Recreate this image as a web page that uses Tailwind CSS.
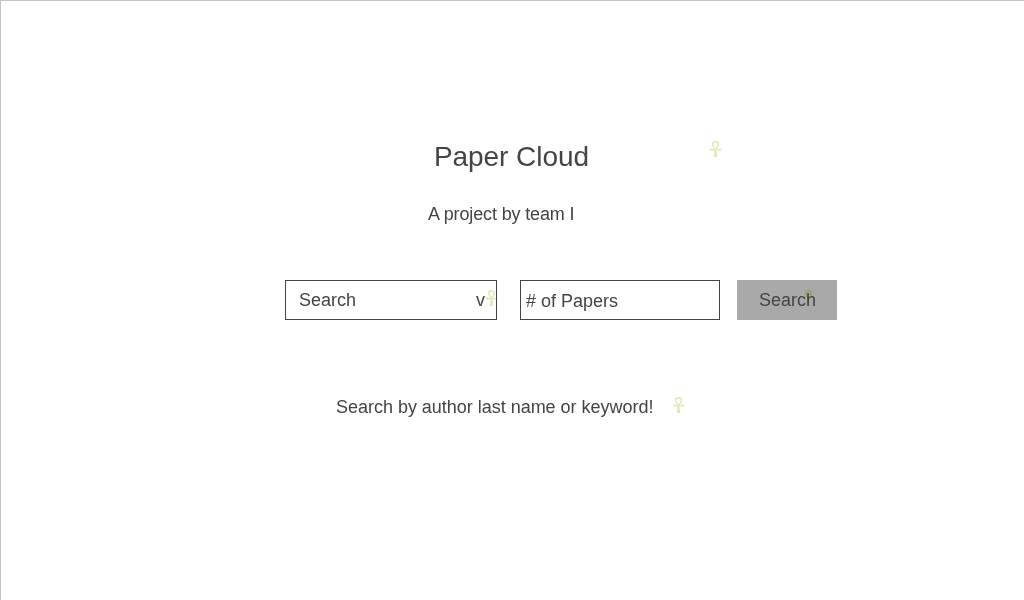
<!DOCTYPE html>
<html lang="en"><head><meta charset="utf-8"><title>Paper Cloud</title>
<script src="https://cdn.jsdelivr.net/npm/@tailwindcss/browser@4"></script></head>
<body class="bg-white">
<svg class="hidden"><symbol id="ankh" viewBox="0 0 13 17"><path d="M6.500 8C4.700 6.600 3.600 5.200 3.600 3.500a2.900 2.700 0 0 1 5.800 0C9.400 5.200 8.300 6.600 6.500 8z" fill="none" stroke="currentColor" stroke-width="1.400"/><path d="M.9 7.500l5 .5h1.200l5-.5v2.100l-4.700-.4.8 6.900H4.800l.8-6.900-4.700.4z" fill="currentColor"/></symbol></svg>
<main class="relative w-[1024px] h-[600px] overflow-hidden border-l border-t border-[#c4c4c4] bg-white font-['Liberation_Sans',sans-serif] text-[18px] leading-5 text-[#444]">
<h1 class="mt-[140px] ml-[433px] text-[28px] leading-8 tracking-[-0.07px] whitespace-nowrap">Paper Cloud</h1>
<p class="mt-[31px] ml-[427px] tracking-[-0.14px]">A project by team I</p>
<form class="mt-[56px] ml-[284px] flex h-10">
<div class="flex w-[212px] items-center justify-between border border-[#444] pl-[13px] pr-[11px]"><span>Search</span><span>v</span></div>
<div class="ml-[23px] flex w-[200px] items-center border border-[#444] pl-[5px] pt-0.5">#&nbsp;of Papers</div>
<button type="button" class="ml-[17px] w-[100px] bg-[#a9a9a9] pl-px">Search</button>
</form>
<p class="mt-[77px] ml-[335px] tracking-[-0.02px]">Search by author last name or keyword!</p>
<svg class="absolute left-[708px] top-[140px] w-[13px] h-[17px] text-[#e4e6b9]"><use href="#ankh"/></svg>
<svg class="absolute left-[484px] top-[289px] w-[13px] h-[17px] text-[#e4e6b9] mix-blend-multiply"><use href="#ankh"/></svg>
<svg class="absolute left-[801px] top-[289px] w-[13px] h-[17px] text-[#e8ea90] mix-blend-multiply"><path d="M6.500 8C4.700 6.600 3.600 5.200 3.600 3.500a2.900 2.700 0 0 1 5.800 0C9.400 5.200 8.300 6.600 6.500 8v7" fill="none" stroke="currentColor" stroke-width="1.300"/></svg>
<svg class="absolute left-[671px] top-[396px] w-[13px] h-[17px] text-[#e4e6b9]"><use href="#ankh"/></svg>
</main></body></html>
